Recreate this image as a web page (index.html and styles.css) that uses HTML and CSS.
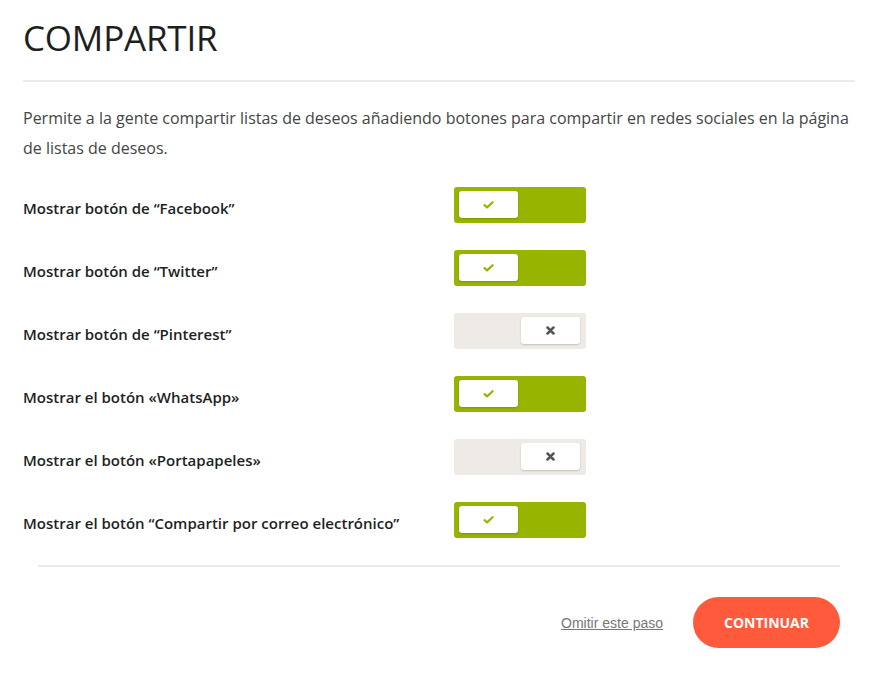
FILE: index.html
```html
<!DOCTYPE html>
<html lang="es">
<head>
<meta charset="utf-8">
<title>Compartir</title>
<link rel="stylesheet" href="styles.css">
</head>
<body>
<div class="page">
  <h1 class="title">COMPARTIR</h1>
  <div class="rule"></div>
  <p class="intro">Permite a la gente compartir listas de deseos añadiendo botones para compartir en redes sociales en la página de listas de deseos.</p>

  <div class="options">
    <div class="row">
      <span class="label">Mostrar botón de “Facebook”</span>
      <span class="toggle on"><span class="knob"><svg class="check" viewBox="0 0 12 9" width="11" height="8"><path d="M1.5 4.6 L4.4 7.2 L10.6 1.4" fill="none" stroke="#97b400" stroke-width="2.4" stroke-linecap="round" stroke-linejoin="round"/></svg></span></span>
    </div>
    <div class="row">
      <span class="label">Mostrar botón de “Twitter”</span>
      <span class="toggle on"><span class="knob"><svg class="check" viewBox="0 0 12 9" width="11" height="8"><path d="M1.5 4.6 L4.4 7.2 L10.6 1.4" fill="none" stroke="#97b400" stroke-width="2.4" stroke-linecap="round" stroke-linejoin="round"/></svg></span></span>
    </div>
    <div class="row">
      <span class="label">Mostrar botón de “Pinterest”</span>
      <span class="toggle off"><span class="knob"><svg class="cross" viewBox="0 0 9 9" width="9" height="9"><path d="M1.5 1.5 L7.5 7.5 M7.5 1.5 L1.5 7.5" fill="none" stroke="#555" stroke-width="2.5" stroke-linecap="round"/></svg></span></span>
    </div>
    <div class="row">
      <span class="label">Mostrar el botón «WhatsApp»</span>
      <span class="toggle on"><span class="knob"><svg class="check" viewBox="0 0 12 9" width="11" height="8"><path d="M1.5 4.6 L4.4 7.2 L10.6 1.4" fill="none" stroke="#97b400" stroke-width="2.4" stroke-linecap="round" stroke-linejoin="round"/></svg></span></span>
    </div>
    <div class="row">
      <span class="label">Mostrar el botón «Portapapeles»</span>
      <span class="toggle off"><span class="knob"><svg class="cross" viewBox="0 0 9 9" width="9" height="9"><path d="M1.5 1.5 L7.5 7.5 M7.5 1.5 L1.5 7.5" fill="none" stroke="#555" stroke-width="2.5" stroke-linecap="round"/></svg></span></span>
    </div>
    <div class="row">
      <span class="label">Mostrar el botón “Compartir por correo electrónico”</span>
      <span class="toggle on"><span class="knob"><svg class="check" viewBox="0 0 12 9" width="11" height="8"><path d="M1.5 4.6 L4.4 7.2 L10.6 1.4" fill="none" stroke="#97b400" stroke-width="2.4" stroke-linecap="round" stroke-linejoin="round"/></svg></span></span>
    </div>
  </div>

  <div class="footer">
    <div class="rule2"></div>
    <div class="actions">
      <a class="skip" href="#">Omitir este paso</a>
      <button class="continue" type="button">CONTINUAR</button>
    </div>
  </div>
</div>
</body>
</html>
```

FILE: styles.css
```css
* { box-sizing: border-box; }
html, body { margin: 0; padding: 0; background: #fff; }
body { font-family: "Open Sans", "Noto Sans", sans-serif; color: #222; }

.page {
  width: 872px;
  padding: 13px 17px 0 23px;
}

.title {
  margin: 0;
  font-size: 35px;
  font-weight: 400;
  line-height: 49px;
  color: #1e1e1e;
  letter-spacing: -0.2px;
}

.rule {
  height: 2px;
  background: #ebebeb;
  margin-top: 18px;
}

.intro {
  margin: 21px 0 0 0;
  font-size: 16px;
  line-height: 30px;
  color: #454545;
}

.options {
  margin-top: 24px;
  display: flex;
  flex-direction: column;
  gap: 27px;
}

.row {
  display: flex;
  align-items: center;
}

.label {
  width: 431px;
  font-size: 15px;
  font-weight: 600;
  line-height: 20px;
  color: #1f1f1f;
  padding-top: 5px;
}

.toggle {
  width: 132px;
  height: 36px;
  border-radius: 3px;
  display: flex;
  padding: 4px 6px 5px 5px;
}
.toggle.on { background: #97b400; justify-content: flex-start; }
.toggle.off { background: #eeebe6; justify-content: flex-end; }

.knob {
  width: 59px;
  height: 27px;
  background: #fff;
  border-radius: 3px;
  box-shadow: 0 1px 2px rgba(0,0,0,0.18);
  display: flex;
  align-items: center;
  justify-content: center;
}
.check, .cross { display: block; }

.footer {
  margin-top: 27px;
  padding: 0 15px 0 15px;
}

.rule2 {
  height: 2px;
  background: #ebebeb;
}

.actions {
  margin-top: 30px;
  display: flex;
  justify-content: flex-end;
  align-items: center;
  gap: 30px;
}

.skip {
  font-family: "Liberation Sans", Arial, sans-serif;
  font-size: 14px;
  color: #777;
  text-decoration: underline;
}

.continue {
  width: 147px;
  height: 51px;
  border: 0;
  border-radius: 26px;
  background: #ff5a3b;
  color: #fff;
  font-family: "Open Sans", sans-serif;
  font-size: 14px;
  font-weight: 700;
  letter-spacing: 0;
  cursor: pointer;
}
```
